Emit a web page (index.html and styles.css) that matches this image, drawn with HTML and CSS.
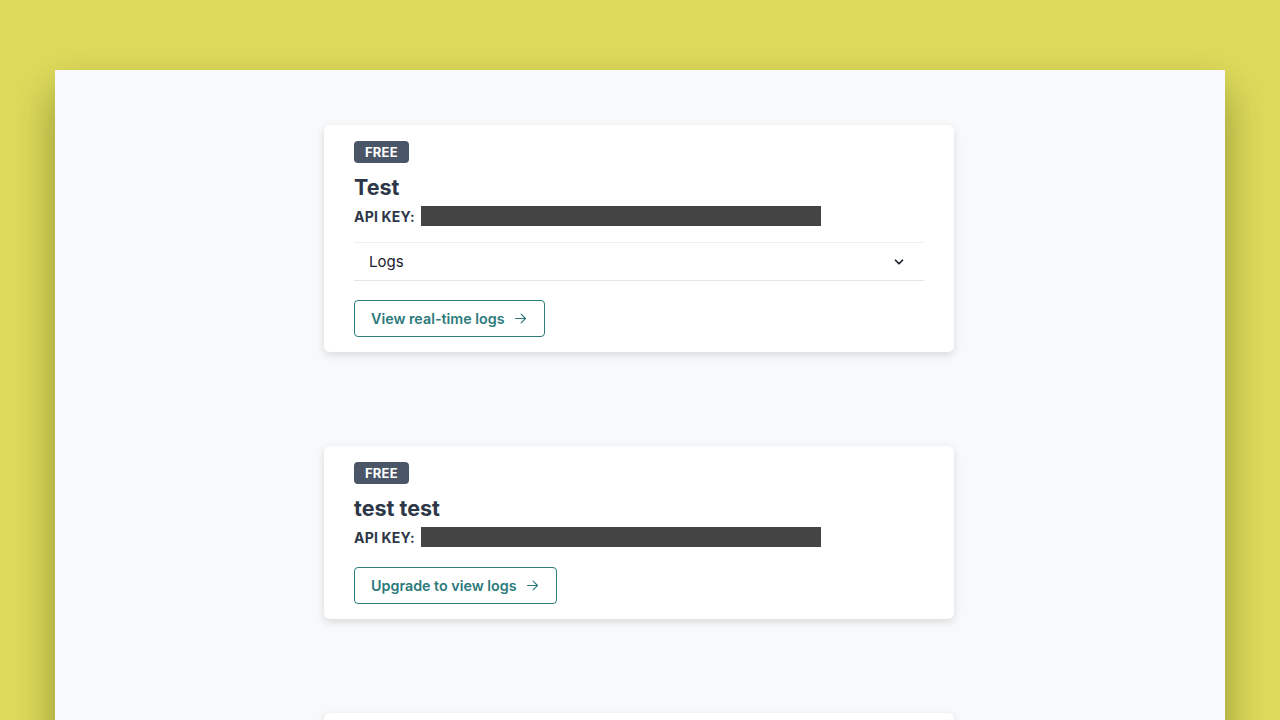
FILE: index.html
```html
<!DOCTYPE html>
<html>
<head>
<meta charset="utf-8">
<link rel="stylesheet" href="styles.css">
</head>
<body>
<div class="window">
  <div class="card">
    <span class="badge">FREE</span>
    <h2 class="title">Test</h2>
    <div class="key"><span class="key-label">API KEY:</span><span class="redact"></span></div>
    <div class="logs">
      <span>Logs</span>
      <svg class="chev" width="14" height="14" viewBox="0 0 24 24" fill="none" stroke="#1a202c" stroke-width="3" stroke-linecap="round" stroke-linejoin="round"><path d="M6 9l6 6 6-6"/></svg>
    </div>
    <a class="btn">View real-time logs <svg width="15" height="15" viewBox="0 0 24 24" fill="none" stroke="currentColor" stroke-width="1.8" stroke-linecap="round" stroke-linejoin="round"><path d="M4 12h16M13 5l7 7-7 7"/></svg></a>
  </div>
  <div class="card">
    <span class="badge">FREE</span>
    <h2 class="title">test test</h2>
    <div class="key"><span class="key-label">API KEY:</span><span class="redact"></span></div>
    <a class="btn btn-tight">Upgrade to view logs <svg width="15" height="15" viewBox="0 0 24 24" fill="none" stroke="currentColor" stroke-width="1.8" stroke-linecap="round" stroke-linejoin="round"><path d="M4 12h16M13 5l7 7-7 7"/></svg></a>
  </div>
  <div class="card card-stub"></div>
</div>
</body>
</html>
```
FILE: styles.css
```css
html, body {
  margin: 0;
  height: 100%;
  overflow: hidden;
}
body {
  background: #dedb5c;
  font-family: Inter, "Noto Sans", sans-serif;
  padding: 70px 0 0 55px;
  box-sizing: border-box;
}
.window {
  width: 1170px;
  height: 700px;
  background: #f8f9fa;
  box-shadow: 0 20px 40px rgba(60, 60, 0, 0.45);
  display: flex;
  flex-direction: column;
  align-items: center;
  padding: 55px 2px 0 0;
  box-sizing: border-box;
  gap: 94px;
}
.card {
  width: 630px;
  box-sizing: border-box;
  background: #fff;
  border-radius: 6px;
  box-shadow: 0 3px 8px rgba(0, 0, 0, 0.13);
  padding: 16px 30px 15px;
  display: flex;
  flex-direction: column;
  align-items: flex-start;
  flex-shrink: 0;
}
.card-stub {
  height: 60px;
}
.badge {
  display: inline-flex;
  align-items: center;
  height: 22px;
  padding: 0 11px;
  background: #4a5568;
  color: #fff;
  border-radius: 4px;
  font-size: 13px;
  font-weight: 700;
  letter-spacing: 0.2px;
}
.title {
  margin: 10px 0 0;
  font-size: 21.5px;
  line-height: 28px;
  font-weight: 700;
  color: #2d3748;
}
.key {
  margin-top: 5px;
  display: flex;
  align-items: center;
  height: 20px;
}
.key-label {
  font-size: 14px;
  font-weight: 700;
  color: #2d3748;
  margin-right: 6px;
  letter-spacing: 0.2px;
}
.redact {
  width: 400px;
  height: 20px;
  background: #444;
}
.logs {
  margin-top: 16px;
  align-self: stretch;
  height: 39px;
  box-sizing: border-box;
  border-top: 1px solid #edf0f3;
  border-bottom: 1px solid #e2e6ea;
  display: flex;
  align-items: center;
  justify-content: space-between;
  padding: 0 18px 0 15px;
  font-size: 15px;
  color: #1a202c;
}
.btn {
  margin-top: 19px;
  display: inline-flex;
  align-items: center;
  gap: 8px;
  height: 37px;
  box-sizing: border-box;
  padding: 0 16px 0 16px;
  border: 1px solid #2c7a7b;
  border-radius: 4px;
  color: #2c7a7b;
  font-size: 14.3px;
  font-weight: 600;
}
.btn-tight {
  margin-top: 20px;
}
```
